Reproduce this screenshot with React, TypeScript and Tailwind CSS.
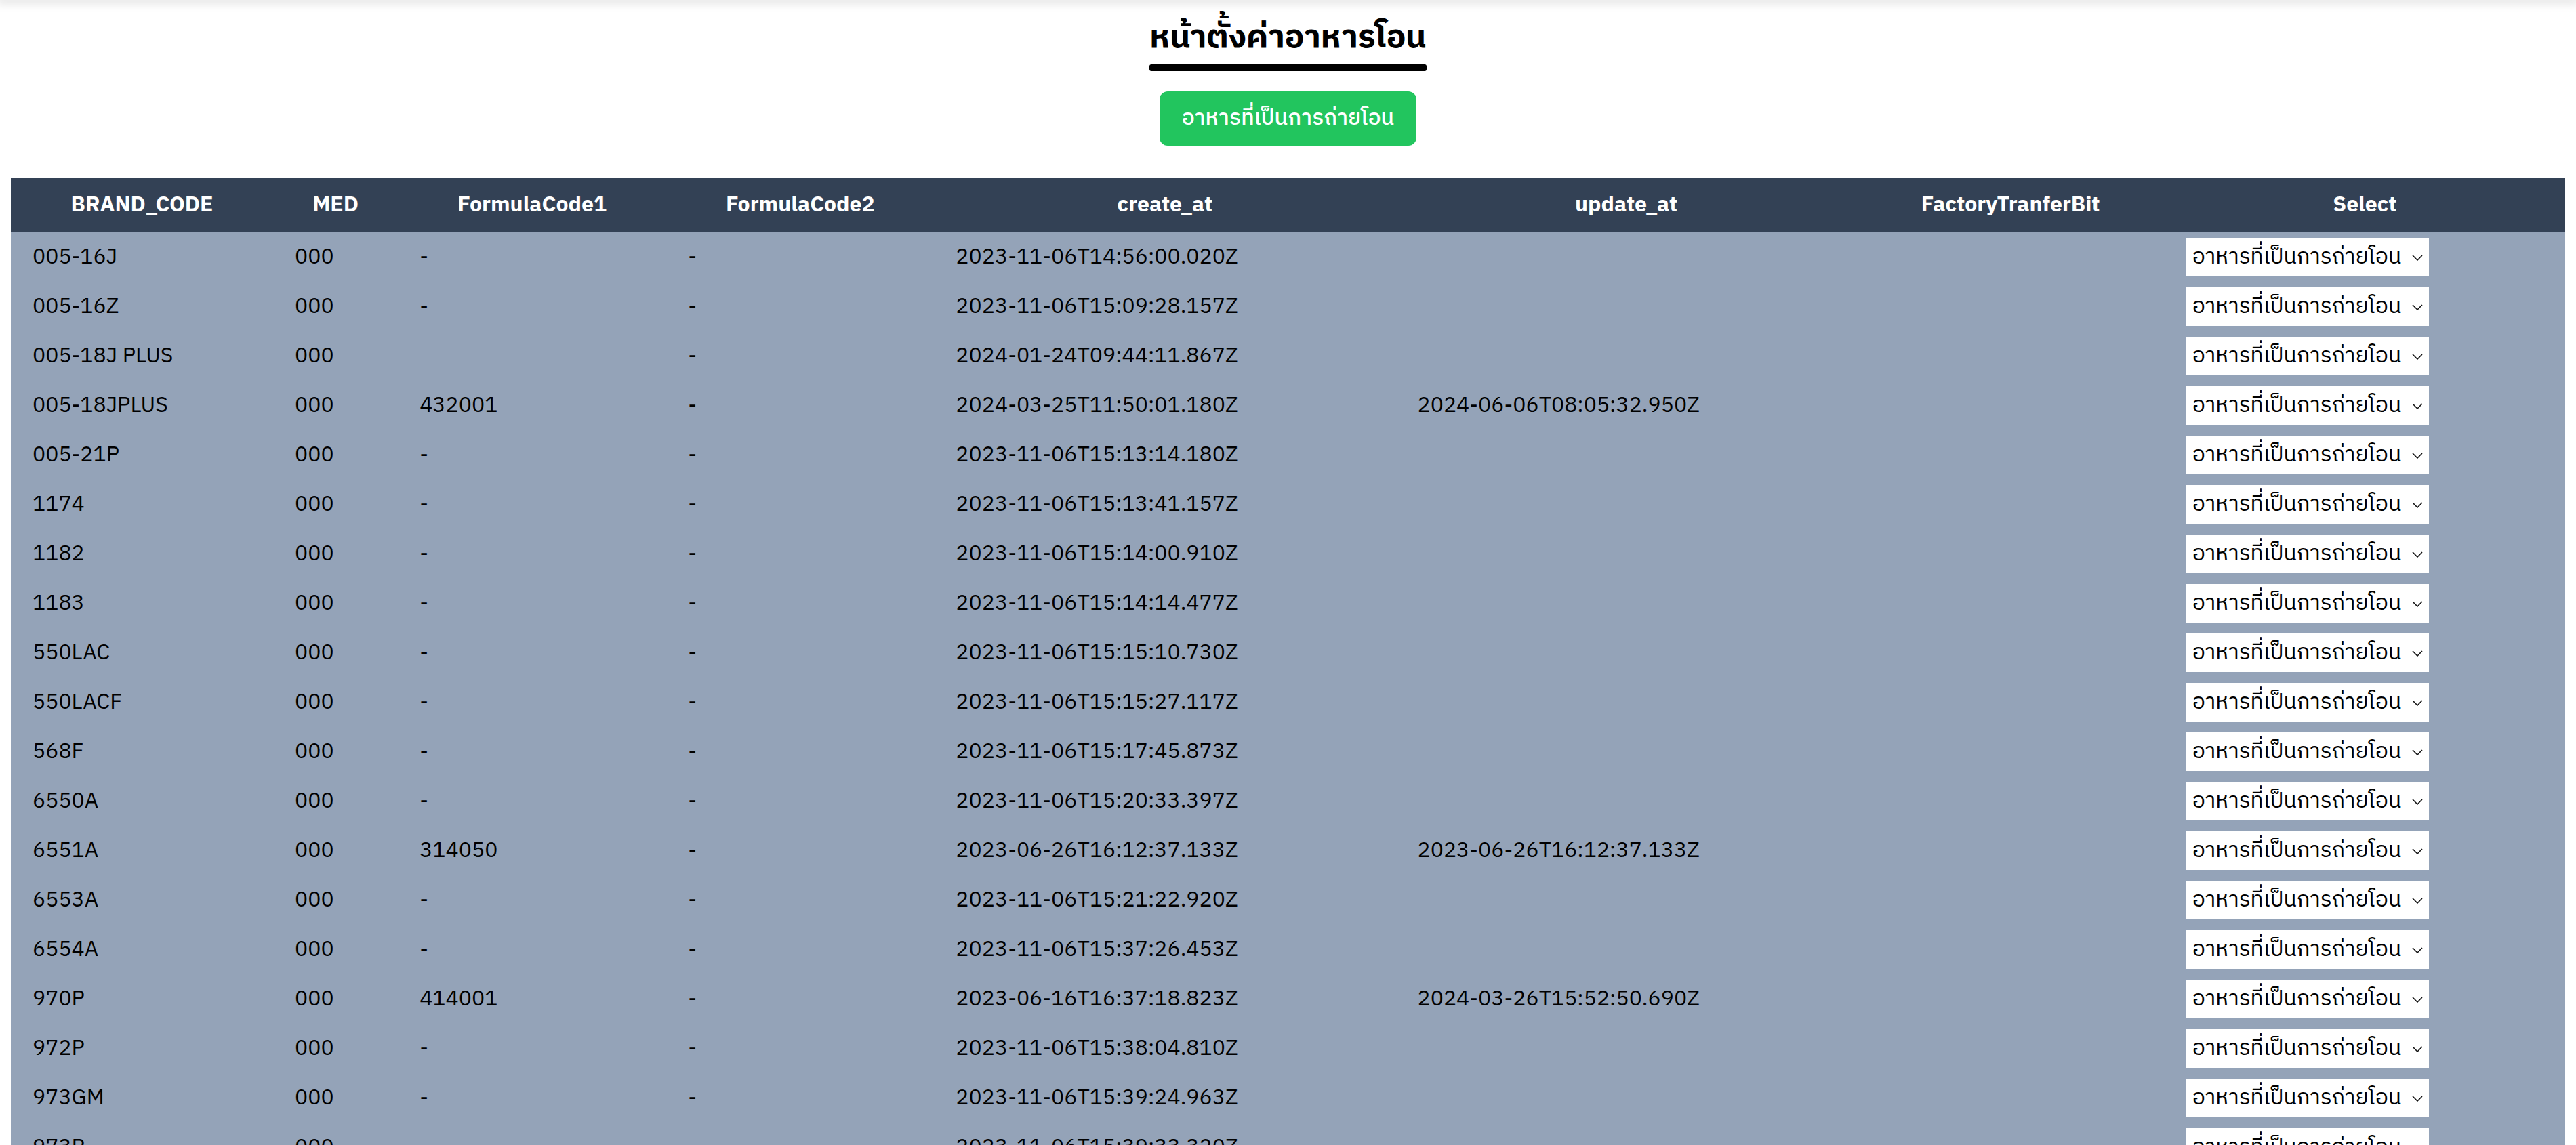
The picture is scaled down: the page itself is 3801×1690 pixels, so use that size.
import { useState } from "react";

type Row = {
  brand: string;
  med: string;
  f1: string;
  f2: string;
  created: string;
  updated: string;
};

const rows: Row[] = [
  { brand: "005-16J", med: "000", f1: "-", f2: "-", created: "2023-11-06T14:56:00.020Z", updated: "" },
  { brand: "005-16Z", med: "000", f1: "-", f2: "-", created: "2023-11-06T15:09:28.157Z", updated: "" },
  { brand: "005-18J PLUS", med: "000", f1: "", f2: "-", created: "2024-01-24T09:44:11.867Z", updated: "" },
  { brand: "005-18JPLUS", med: "000", f1: "432001", f2: "-", created: "2024-03-25T11:50:01.180Z", updated: "2024-06-06T08:05:32.950Z" },
  { brand: "005-21P", med: "000", f1: "-", f2: "-", created: "2023-11-06T15:13:14.180Z", updated: "" },
  { brand: "1174", med: "000", f1: "-", f2: "-", created: "2023-11-06T15:13:41.157Z", updated: "" },
  { brand: "1182", med: "000", f1: "-", f2: "-", created: "2023-11-06T15:14:00.910Z", updated: "" },
  { brand: "1183", med: "000", f1: "-", f2: "-", created: "2023-11-06T15:14:14.477Z", updated: "" },
  { brand: "550LAC", med: "000", f1: "-", f2: "-", created: "2023-11-06T15:15:10.730Z", updated: "" },
  { brand: "550LACF", med: "000", f1: "-", f2: "-", created: "2023-11-06T15:15:27.117Z", updated: "" },
  { brand: "568F", med: "000", f1: "-", f2: "-", created: "2023-11-06T15:17:45.873Z", updated: "" },
  { brand: "6550A", med: "000", f1: "-", f2: "-", created: "2023-11-06T15:20:33.397Z", updated: "" },
  { brand: "6551A", med: "000", f1: "314050", f2: "-", created: "2023-06-26T16:12:37.133Z", updated: "2023-06-26T16:12:37.133Z" },
  { brand: "6553A", med: "000", f1: "-", f2: "-", created: "2023-11-06T15:21:22.920Z", updated: "" },
  { brand: "6554A", med: "000", f1: "-", f2: "-", created: "2023-11-06T15:37:26.453Z", updated: "" },
  { brand: "970P", med: "000", f1: "414001", f2: "-", created: "2023-06-16T16:37:18.823Z", updated: "2024-03-26T15:52:50.690Z" },
  { brand: "972P", med: "000", f1: "-", f2: "-", created: "2023-11-06T15:38:04.810Z", updated: "" },
  { brand: "973GM", med: "000", f1: "-", f2: "-", created: "2023-11-06T15:39:24.963Z", updated: "" },
  { brand: "973P", med: "000", f1: "-", f2: "-", created: "2023-11-06T15:39:33.320Z", updated: "" },
];

const OPTION = "อาหารที่เป็นการถ่ายโอน";

function TransferSelect() {
  const [value, setValue] = useState("transfer");
  return (
    <div className="relative w-[358px]">
      <select
        value={value}
        onChange={(e) => setValue(e.target.value)}
        className="h-[57px] w-full appearance-none bg-white pl-[9px] pr-[40px] text-[32px] text-black outline-none"
      >
        <option value="transfer">{OPTION}</option>
        <option value="normal">อาหารปกติ</option>
      </select>
      <svg
        className="pointer-events-none absolute right-[9px] top-[25px] h-[9px] w-[16px]"
        viewBox="0 0 16 9"
        fill="none"
        aria-hidden="true"
      >
        <path d="M1 1l7 7 7-7" stroke="#111" strokeWidth="1.6" />
      </svg>
    </div>
  );
}

export default function App() {
  return (
    <div className="min-h-screen bg-white font-['IBM_Plex_Sans_Thai','DejaVu_Sans','Noto_Sans',sans-serif] text-[32px] text-black">
      <div className="h-0 shadow-[0_0_14px_5px_rgba(0,0,0,0.13)]" />

      <div className="flex flex-col items-center pt-[24px]">
        <div className="inline-flex flex-col">
          <h1 className="text-[48px] font-bold leading-[64px]">หน้าตั้งค่าอาหารโอน</h1>
          <div className="mt-[7px] h-[10px] rounded-[3px] bg-black" />
        </div>
        <button
          type="button"
          className="mt-[30px] h-[80px] rounded-[12px] bg-[#22c55e] px-[33px] text-[32px] font-medium text-white"
        >
          {OPTION}
        </button>
      </div>

      <div className="mx-[16px] mt-[48px]">
        <table className="w-full table-fixed border-collapse">
          <colgroup>
            <col className="w-[387px]" />
            <col className="w-[184px]" />
            <col className="w-[396px]" />
            <col className="w-[395px]" />
            <col className="w-[681px]" />
            <col className="w-[680px]" />
            <col className="w-[454px]" />
            <col className="w-[591px]" />
          </colgroup>
          <thead>
            <tr className="h-[80px] bg-[#334155] text-white">
              <th className="font-bold">BRAND_CODE</th>
              <th className="font-bold">MED</th>
              <th className="font-bold">FormulaCode1</th>
              <th className="font-bold">FormulaCode2</th>
              <th className="font-bold">create_at</th>
              <th className="font-bold">update_at</th>
              <th className="font-bold">FactoryTranferBit</th>
              <th className="font-bold">Select</th>
            </tr>
          </thead>
          <tbody className="bg-[#94a3b8]">
            {rows.map((r) => (
              <tr key={r.brand} className="h-[73px]">
                <td className="px-[32px] py-[8px]">{r.brand}</td>
                <td className="px-[32px] py-[8px]">{r.med}</td>
                <td className="px-[32px] py-[8px]">{r.f1}</td>
                <td className="px-[32px] py-[8px]">{r.f2}</td>
                <td className="px-[32px] py-[8px]">{r.created}</td>
                <td className="px-[32px] py-[8px]">{r.updated}</td>
                <td className="px-[32px] py-[8px]"></td>
                <td className="px-[32px] py-[8px]">
                  <TransferSelect />
                </td>
              </tr>
            ))}
          </tbody>
        </table>
      </div>
    </div>
  );
}
